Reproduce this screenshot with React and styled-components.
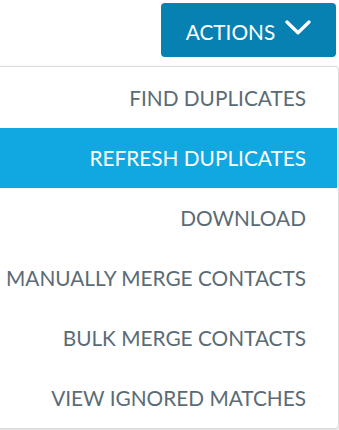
import React from "react";
import styled, { createGlobalStyle } from "styled-components";

const Global = createGlobalStyle`
  html, body { margin: 0; padding: 0; background: #fff; overflow: hidden; }
  body { font-family: Lato, "Open Sans", sans-serif; }
`;

const Page = styled.div`
  width: 339px;
  height: 430px;
  display: flex;
  flex-direction: column;
  align-items: flex-end;
  overflow: hidden;
`;

const ActionButton = styled.button`
  margin: 3px 3px 0 0;
  width: 175px;
  height: 54px;
  background: #0780b2;
  border: none;
  border-radius: 4px;
  color: #fff;
  font-family: Lato, sans-serif;
  font-size: 20.8px;
  display: flex;
  align-items: center;
  justify-content: center;
  gap: 10px;
  padding: 3px 0 0 0;
  cursor: pointer;
`;

const Chevron = styled.svg`
  width: 26px;
  height: 15px;
  margin-top: -9px;
`;

const Menu = styled.ul`
  list-style: none;
  margin: 9px 0 0 0;
  padding: 1px 0 0 0;
  width: 380px;
  flex-shrink: 0;
  border: 1px solid #dcdcdc;
  border-radius: 4px;
  background: #fff;
  box-shadow: 0 1px 3px rgba(0, 0, 0, 0.18);
`;

const Item = styled.li`
  height: 60px;
  display: flex;
  align-items: center;
  justify-content: flex-end;
  font-size: 20.8px;
  padding-bottom: 1px;
  box-sizing: border-box;
  color: ${(p) => (p.$active ? "#ffffff" : "#5a6b75")};
  background: ${(p) => (p.$active ? "#11a7e1" : "transparent")};
  margin-right: ${(p) => (p.$active ? "1px" : "0")};
  padding-right: ${(p) => (p.$active ? "31px" : "32px")};
  white-space: nowrap;
`;

const items = [
  "FIND DUPLICATES",
  "REFRESH DUPLICATES",
  "DOWNLOAD",
  "MANUALLY MERGE CONTACTS",
  "BULK MERGE CONTACTS",
  "VIEW IGNORED MATCHES",
];

export default function App() {
  return (
    <Page>
      <Global />
      <ActionButton>
        ACTIONS
        <Chevron viewBox="0 0 26 15" fill="none">
          <path d="M2 2 L13 12.8 L24 2" stroke="#fff" strokeWidth="3.3" strokeLinecap="round" strokeLinejoin="round" />
        </Chevron>
      </ActionButton>
      <Menu>
        {items.map((t, i) => (
          <Item key={t} $active={i === 1}>{t}</Item>
        ))}
      </Menu>
    </Page>
  );
}
